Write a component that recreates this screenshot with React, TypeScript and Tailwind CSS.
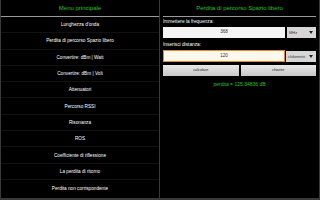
import React from "react";

const items = [
  "Lunghezza d'onda",
  "Perdita di percorso Spazio libero",
  "Convertire: dBm | Watt",
  "Convertire: dBm | Volt",
  "Attenuatori",
  "Percorso RSSI",
  "Risonanza",
  "ROS",
  "Coefficiente di riflessione",
  "La perdita di ritorno",
  "Perdita non corrispondente",
];

function Select({ label }: { label: string }) {
  return (
    <div className="flex-1 h-full bg-[#d6d6d6] flex items-center justify-between pl-[2px] pr-[3px] text-[4px] text-[#333]">
      <span>{label}</span>
      <svg width="4" height="3" viewBox="0 0 4 3">
        <polygon points="0,0 4,0 2,3" fill="#222" />
      </svg>
    </div>
  );
}

export default function App() {
  return (
    <div
      className="w-[320px] h-[200px] bg-black flex overflow-hidden border-b-[2px] border-l-[1px] border-r-[1px] border-[#3a3a3a]"
      style={{ fontFamily: '"Liberation Sans", Arial, sans-serif' }}
    >
      <div className="w-[158px] flex flex-col">
        <div className="h-[17px] flex items-center justify-center text-[6px] text-[#22c422] border-b border-[#9a9a9a]">
          Menu principale
        </div>
        {items.map((t, i) => (
          <div
            key={t}
            className={`h-[16.3px] flex items-center justify-center text-[4.7px] text-white ${i < items.length - 1 ? "border-b border-[#111111]" : ""}`}
          >
            {t}
          </div>
        ))}
      </div>
      <div className="flex-1 border-l-[1px] border-[#3a3a3a] flex flex-col px-[3px]">
        <div className="h-[17px] flex items-center justify-center text-[6px] text-[#22c422] border-b border-[#9a9a9a]">
          Perdita di percorso Spazio libero
        </div>
        <div className="text-[4.8px] text-white mt-[1px] h-[8px] flex items-center">Immettere la frequenza:</div>
        <div className="flex h-[11px] gap-[2px] mt-[1px]">
          <div className="w-[122px] bg-[#f4f4f4] flex items-center justify-center text-[4.6px] text-[#333]">368</div>
          <Select label="MHz" />
        </div>
        <div className="text-[4.8px] text-white mt-[2px] h-[9px] flex items-center">Inserisci distanza:</div>
        <div className="flex h-[12px] gap-[0px] mt-[1px]">
          <div className="w-[122px] bg-[#fff8ee] border-[1px] border-[#e08a30] flex items-center justify-center text-[4.6px] text-[#333]">120</div>
          <div className="flex-1 h-[11px] mt-[1px] ml-[1px] flex">
            <Select label="chilometri" />
          </div>
        </div>
        <div className="flex gap-[2px] h-[11px] mt-[3px]">
          <div className="flex-1 bg-gradient-to-b from-[#e8e8e8] to-[#c8c8c8] flex items-center justify-center text-[3.8px] text-[#222]">
            calcolare
          </div>
          <div className="flex-1 bg-gradient-to-b from-[#e8e8e8] to-[#c8c8c8] flex items-center justify-center text-[3.8px] text-[#222]">
            chiarire
          </div>
        </div>
        <div className="text-[5px] text-[#22c422] text-center mt-[5px]">perdita = 125,34836 dB</div>
      </div>
    </div>
  );
}
